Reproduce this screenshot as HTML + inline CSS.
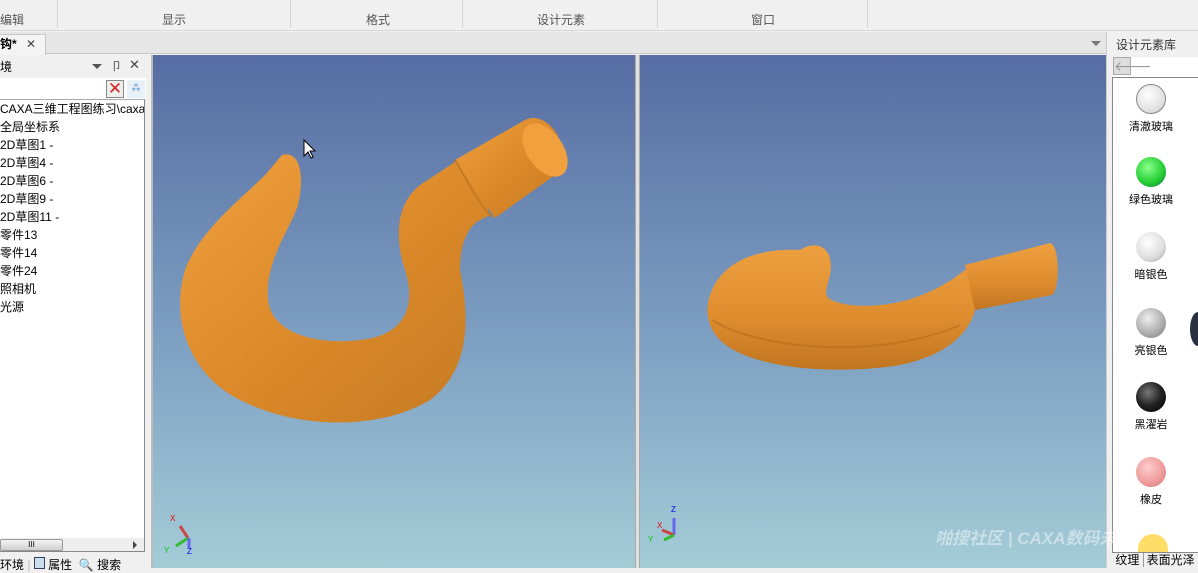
<!DOCTYPE html>
<html><head><meta charset="utf-8"><style>
*{margin:0;padding:0;box-sizing:border-box}
body{width:1198px;height:568px;overflow:hidden;background:#f0f0f0;font-family:"Liberation Sans","Noto Sans CJK SC",sans-serif;font-size:12px;position:relative}
.abs{position:absolute}
.grp{position:absolute;top:11px;color:#555;font-size:12px}
.vsep{position:absolute;top:0;height:28px;width:1px;background:#d6d6d6}
.tree div{height:18px;line-height:18px;font-size:12px;color:#000;white-space:nowrap}
.mat{position:absolute;left:1113px;width:76px;text-align:center;font-size:11px;color:#000}
.ball{width:30px;height:30px;border-radius:50%;margin:0 auto 4px}
</style></head><body>
<!-- ribbon -->
<div class="abs" style="left:0;top:0;width:1198px;height:31px;background:#f0f0f0;border-bottom:1px solid #d8d8d8"></div>
<div class="grp" style="left:0">编辑</div>
<div class="vsep" style="left:57px"></div>
<div class="grp" style="left:162px">显示</div>
<div class="vsep" style="left:290px"></div>
<div class="grp" style="left:366px">格式</div>
<div class="vsep" style="left:462px"></div>
<div class="grp" style="left:537px">设计元素</div>
<div class="vsep" style="left:657px"></div>
<div class="grp" style="left:751px">窗口</div>
<div class="vsep" style="left:867px"></div>
<!-- tab strip -->
<div class="abs" style="left:0;top:32px;width:1106px;height:22px;background:#e6e6e6;border-bottom:1px solid #c8c8c8"></div>
<div class="abs" style="left:0;top:34px;width:46px;height:21px;background:#f4f4f4;border:1px solid #c8c8c8;border-left:none;border-bottom:none;font-weight:bold;font-size:12px;line-height:19px">钩* <span style="font-weight:normal;color:#444;margin-left:6px">✕</span></div>
<div class="abs" style="left:1091px;top:41px;width:0;height:0;border-left:5px solid transparent;border-right:5px solid transparent;border-top:5px solid #777"></div>
<!-- left panel -->
<div class="abs" style="left:0;top:55px;width:146px;height:513px;background:#f0f0f0"></div>
<div class="abs" style="left:0;top:58px;font-size:12px">境</div>
<div class="abs" style="left:92px;top:64px;border-left:5px solid transparent;border-right:5px solid transparent;border-top:5px solid #555"></div>
<div class="abs" style="left:111px;top:58px;font-size:11px;color:#444">卩</div>
<div class="abs" style="left:129px;top:57px;font-size:13px;color:#444">✕</div>
<div class="abs" style="left:0;top:78px;width:146px;height:21px;background:#fff"></div>
<div class="abs" style="left:106px;top:80px;width:18px;height:18px;border:1px solid #888;background:#eee;color:#d22;font-size:17px;line-height:16px;text-align:center">✕</div>
<div class="abs" style="left:127px;top:80px;width:18px;height:18px;background:#e8f0f8;color:#48c;font-size:10px;line-height:18px;text-align:center">⁂</div>
<div class="abs tree" style="left:0;top:99px;width:145px;height:439px;background:#fff;border-right:1px solid #888;border-top:1px solid #aaa;overflow:hidden">
<div>CAXA三维工程图练习\caxa1</div><div>全局坐标系</div><div>2D草图1 -</div><div>2D草图4 -</div><div>2D草图6 -</div><div>2D草图9 -</div><div>2D草图11 -</div><div>零件13</div><div>零件14</div><div>零件24</div><div>照相机</div><div>光源</div>
</div>
<div class="abs" style="left:0;top:538px;width:145px;height:14px;background:#eee;border-right:1px solid #888;border-bottom:1px solid #888"></div>
<div class="abs" style="left:0;top:539px;width:63px;height:12px;background:linear-gradient(#f4f4f4,#cfcfcf);border:1px solid #999;border-radius:2px;font-size:8px;text-align:center;line-height:10px">III</div>
<div class="abs" style="left:133px;top:541px;border-top:4px solid transparent;border-bottom:4px solid transparent;border-left:4px solid #444"></div>
<div class="abs" style="left:0;top:556px;font-size:12px;white-space:nowrap">环境 <span style="color:#bbb">|</span> <span style="display:inline-block;width:11px;height:12px;border:1px solid #345;background:#cde"></span> 属性 &nbsp;<span style="color:#57a">🔍</span> 搜索</div>
<!-- viewports -->
<div class="abs" style="left:151px;top:55px;width:484px;height:513px;background:linear-gradient(#566ca2,#7d9fc2 55%,#a4ccd7);border-left:2px solid #bbb"></div>
<div class="abs" style="left:635px;top:55px;width:5px;height:513px;background:#e0e0e0;border-left:1px solid #aaa;border-right:1px solid #aaa"></div>
<div class="abs" style="left:640px;top:55px;width:466px;height:513px;background:linear-gradient(#566ca2,#7d9fc2 55%,#a4ccd7)"></div>
<svg class="abs" style="left:0;top:0" width="1198" height="568">
<defs>
<linearGradient id="o" x1="0" y1="0" x2="1" y2="1"><stop offset="0" stop-color="#f0a040"/><stop offset=".5" stop-color="#dc8a2a"/><stop offset="1" stop-color="#c47a22"/></linearGradient>
<linearGradient id="o2" x1="0" y1="0" x2="0" y2="1"><stop offset="0" stop-color="#eea040"/><stop offset=".6" stop-color="#dd8c2e"/><stop offset="1" stop-color="#c07520"/></linearGradient>
</defs>
<!-- left hook -->
<path d="M282 155 C300 150 305 175 298 205 C290 230 265 260 268 300 C272 335 320 345 360 340 C410 335 415 300 405 270 C395 240 395 205 420 185 L458 160 L470 155 L490 215 L480 220 C470 225 460 240 460 270 C470 320 470 370 430 400 C380 430 300 430 240 400 C190 375 170 320 185 270 C200 230 240 200 265 175 Z" fill="url(#o)"/>
<path d="M455 160 L525 120 C545 110 570 140 562 170 L495 218 Z" fill="url(#o)"/>
<ellipse cx="545" cy="150" rx="18" ry="30" transform="rotate(-35 545 150)" fill="#f0a03c"/>
<path d="M455 160 C465 175 475 200 492 217" stroke="#c47a22" stroke-width="2" fill="none"/>
<!-- right hook -->
<path d="M712 290 C725 260 760 248 800 250 C815 240 835 245 830 275 C825 295 820 300 850 305 C900 310 940 290 965 270 L1000 258 L1000 300 L975 310 C970 330 950 355 900 365 C840 375 750 370 720 340 C705 325 705 305 712 290 Z" fill="url(#o2)"/>
<path d="M965 265 L1050 243 C1060 245 1060 290 1052 295 L975 310 Z" fill="url(#o2)"/>
<path d="M712 320 C760 350 880 360 960 325" stroke="#b86e1e" stroke-width="2" fill="none" opacity=".6"/>
<!-- cursor -->
<path d="M304 140 L304 156 L308 152 L311 158 L313 157 L310 151 L315 151 Z" fill="#fff" stroke="#000" stroke-width="1"/>
<!-- axes -->
<g font-size="8" font-family="Liberation Sans"><text x="170" y="521" fill="#e00">X</text><text x="164" y="553" fill="#0c0">Y</text><text x="187" y="554" fill="#00e">Z</text>
<line x1="180" y1="526" x2="188" y2="538" stroke="#c44" stroke-width="3"/><line x1="188" y1="538" x2="176" y2="546" stroke="#3b3" stroke-width="3"/><line x1="189" y1="538" x2="189" y2="548" stroke="#66e" stroke-width="3"/>
<text x="671" y="512" fill="#00e">Z</text><text x="657" y="528" fill="#e00">X</text><text x="648" y="542" fill="#0c0">Y</text>
<line x1="674" y1="518" x2="674" y2="535" stroke="#66e" stroke-width="3"/><line x1="674" y1="535" x2="662" y2="530" stroke="#c44" stroke-width="3"/><line x1="674" y1="535" x2="664" y2="540" stroke="#3b3" stroke-width="3"/></g>
</svg>
<!-- right panel -->
<div class="abs" style="left:1106px;top:32px;width:92px;height:536px;background:#f0f0f0;border-left:1px solid #ccc"></div>
<div class="abs" style="left:1116px;top:36px;font-size:12px;color:#333">设计元素库</div>
<div class="abs" style="left:1113px;top:57px;width:85px;height:20px;background:#fff"></div>
<div class="abs" style="left:1113px;top:57px;width:18px;height:18px;background:#ddd;border:1px solid #aaa;color:#999;font-size:14px;line-height:16px;text-align:center">🡐</div>
<div class="abs" style="left:1112px;top:77px;width:86px;height:476px;background:#fff;border:1px solid #888;border-right:none"></div>
<div class="mat" style="top:84px"><div class="ball" style="background:radial-gradient(circle at 40% 35%,#fff,#ddd 70%,#999);border:1px solid #888"></div>清澈玻璃</div>
<div class="mat" style="top:157px"><div class="ball" style="background:radial-gradient(circle at 40% 35%,#8f8,#2c3 60%,#164)"></div>绿色玻璃</div>
<div class="mat" style="top:232px"><div class="ball" style="background:radial-gradient(circle at 40% 35%,#fff,#ddd 60%,#999)"></div>暗银色</div>
<div class="mat" style="top:308px"><div class="ball" style="background:radial-gradient(circle at 40% 35%,#eee,#aaa 60%,#777)"></div>亮银色</div>
<div class="mat" style="top:382px"><div class="ball" style="background:radial-gradient(circle at 40% 35%,#777,#222 50%,#000)"></div>黑濯岩</div>
<div class="mat" style="top:457px"><div class="ball" style="background:radial-gradient(circle at 40% 35%,#fcc,#e99 60%,#c77)"></div>橡皮</div>
<div class="abs" style="left:1138px;top:534px;width:30px;height:18px;border-radius:15px 15px 0 0;background:#fd6"></div>
<div class="abs" style="left:1190px;top:312px;width:16px;height:34px;border-radius:50%;background:#2a3040"></div>
<div class="abs" style="left:1112px;top:553px;width:86px;height:15px;font-size:12px;line-height:15px;white-space:nowrap">&nbsp;纹理 <span style="border-left:1px solid #999;padding-left:3px">表面光泽</span></div>
<div class="abs" style="left:935px;top:524px;font-size:17px;color:rgba(255,255,255,.45);font-weight:bold;font-style:italic;white-space:nowrap">啪搜社区 | CAXA数码未方</div>
</body></html>
